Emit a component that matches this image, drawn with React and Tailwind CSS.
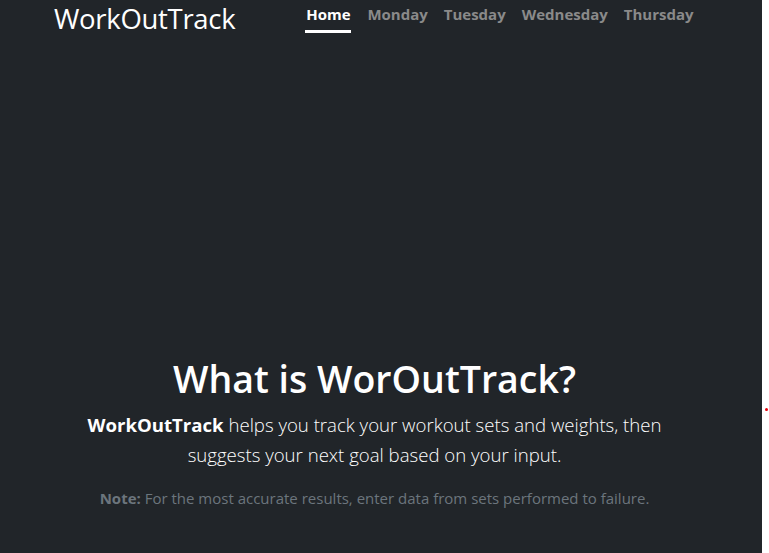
import React from "react";

const days = ["Monday", "Tuesday", "Wednesday", "Thursday"];

const App = () => {
  return (
    <div className="flex h-[553px] w-[769px] bg-white font-['Open_Sans',sans-serif]">
      <div className="flex h-full w-[762px] flex-col bg-[#212529] text-white">
        {/* NAVBAR */}
        <nav className="flex items-start pl-[54px]">
          <span className="mt-[1px] text-[27.5px] font-medium leading-[36px] tracking-[-0.3px]">
            WorkOutTrack
          </span>
          <ul className="ml-[70px] mt-[3px] flex gap-[16px] text-[15px] font-bold leading-[22px]">
            <li className="flex flex-col items-center">
              <span className="text-white">Home</span>
              <span className="mt-[5px] h-[3px] w-[46px] bg-white" />
            </li>
            {days.map((day) => (
              <li key={day} className="text-[#8a8a8a]">
                {day}
              </li>
            ))}
          </ul>
        </nav>

        {/* HERO */}
        <section className="mt-auto flex w-[749px] flex-col items-center pb-[44px] text-center">
          <h1 className="text-[37.5px] font-semibold leading-[48px]">What is WorOutTrack?</h1>
          <p className="mt-[7px] w-[600px] text-[18.6px] font-light leading-[30px]">
            <strong className="font-bold">WorkOutTrack</strong> helps you track your workout sets
            and weights, then suggests your next goal based on your input.
          </p>
          <p className="mt-[17px] text-[15px] leading-[22px] text-[#6c757d]">
            <strong className="font-bold">Note:</strong> For the most accurate results, enter data
            from sets performed to failure.
          </p>
        </section>
      </div>

      <div className="relative flex-1">
        <span className="absolute left-[3px] top-[408px] h-[3px] w-[3px] rounded-full bg-red-600" />
      </div>
    </div>
  );
};

export default App;
